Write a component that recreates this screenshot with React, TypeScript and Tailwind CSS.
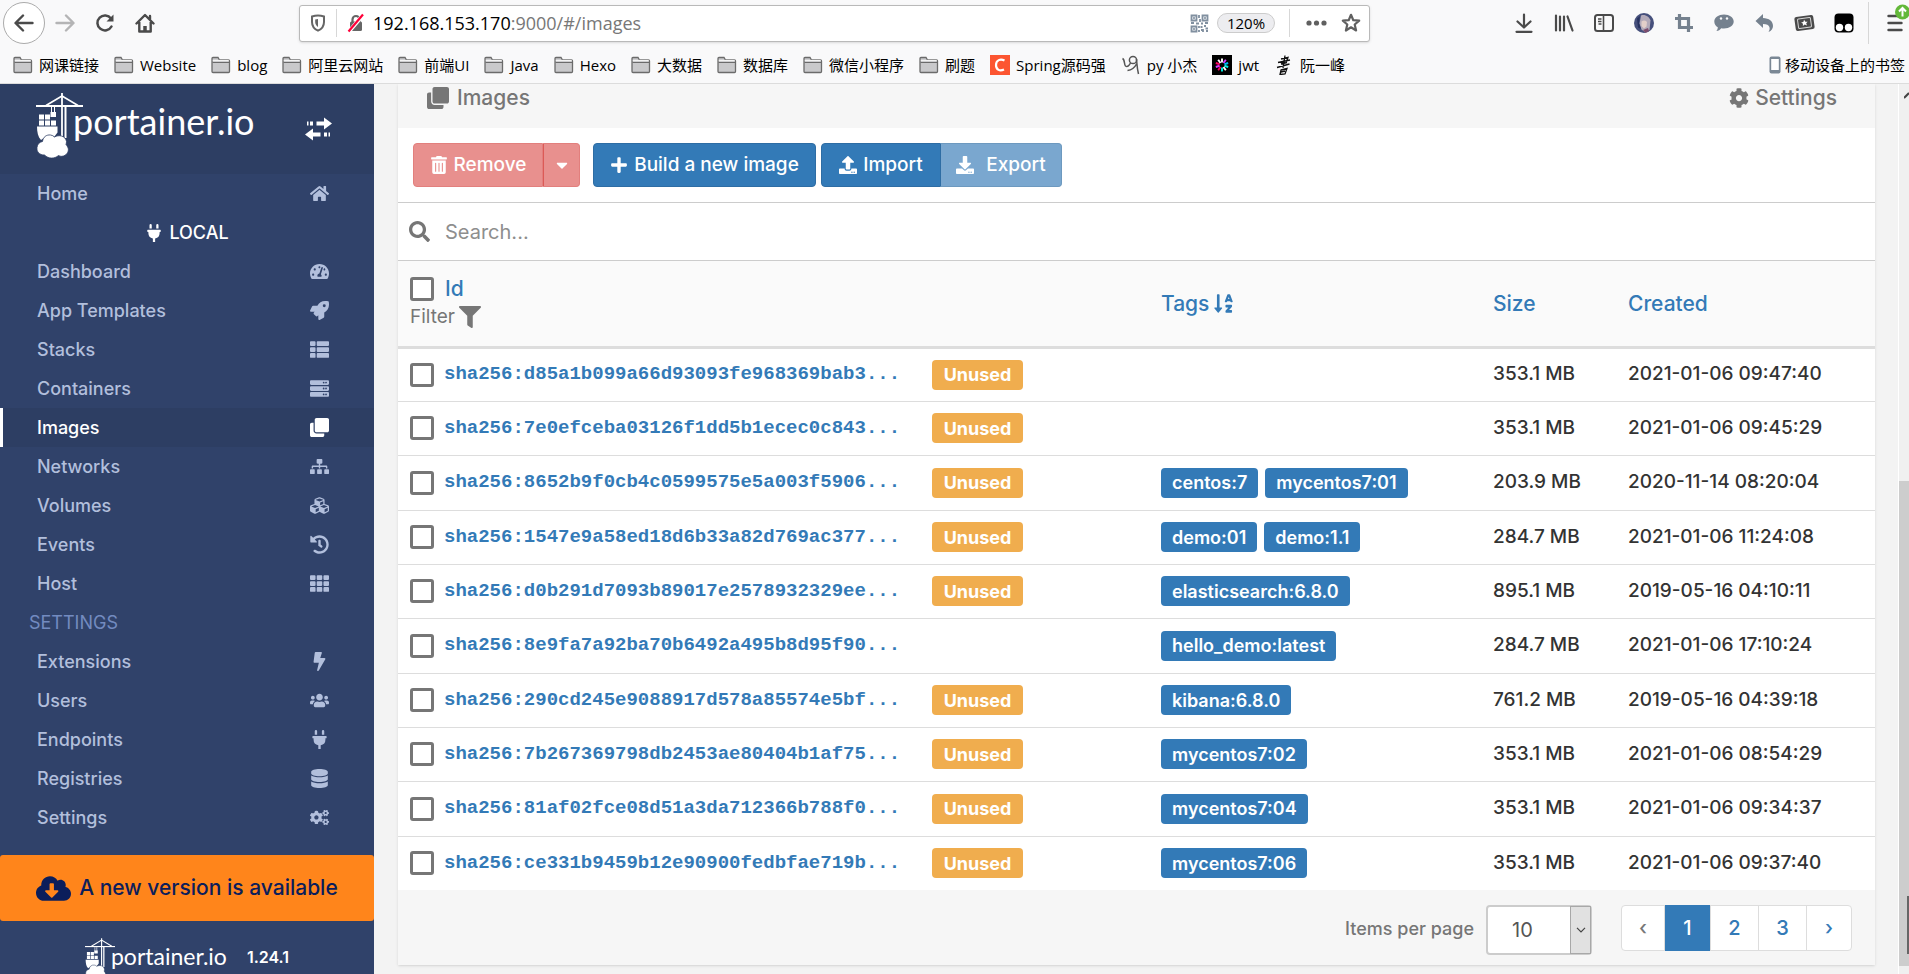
import type { ReactNode } from 'react';
import type { IconType } from 'react-icons';
import {
  FaBolt, FaCaretDown, FaClone, FaCloudDownloadAlt, FaCog, FaCogs, FaCubes, FaDatabase, FaDownload,
  FaFilter, FaHistory, FaHome, FaPlug, FaPlus, FaRocket, FaSearch, FaServer, FaSitemap,
  FaSortAlphaDown, FaTachometerAlt, FaTh, FaThList, FaTrashAlt, FaUpload, FaUsers,
} from 'react-icons/fa';

interface NavItem {
  label: string;
  icon: IconType;
  active?: boolean;
}

interface ImageRow {
  id: string;
  unused: boolean;
  tags: string[];
  size: string;
  created: string;
}

const ENDPOINT_NAV: NavItem[] = [
  { label: 'Dashboard', icon: FaTachometerAlt },
  { label: 'App Templates', icon: FaRocket },
  { label: 'Stacks', icon: FaThList },
  { label: 'Containers', icon: FaServer },
  { label: 'Images', icon: FaClone, active: true },
  { label: 'Networks', icon: FaSitemap },
  { label: 'Volumes', icon: FaCubes },
  { label: 'Events', icon: FaHistory },
  { label: 'Host', icon: FaTh },
];

const SETTINGS_NAV: NavItem[] = [
  { label: 'Extensions', icon: FaBolt },
  { label: 'Users', icon: FaUsers },
  { label: 'Endpoints', icon: FaPlug },
  { label: 'Registries', icon: FaDatabase },
  { label: 'Settings', icon: FaCogs },
];

const ROWS: ImageRow[] = [
  { id: 'd85a1b099a66d93093fe968369bab3', unused: true, tags: [], size: '353.1 MB', created: '2021-01-06 09:47:40' },
  { id: '7e0efceba03126f1dd5b1ecec0c843', unused: true, tags: [], size: '353.1 MB', created: '2021-01-06 09:45:29' },
  { id: '8652b9f0cb4c0599575e5a003f5906', unused: true, tags: ['centos:7', 'mycentos7:01'], size: '203.9 MB', created: '2020-11-14 08:20:04' },
  { id: '1547e9a58ed18d6b33a82d769ac377', unused: true, tags: ['demo:01', 'demo:1.1'], size: '284.7 MB', created: '2021-01-06 11:24:08' },
  { id: 'd0b291d7093b89017e2578932329ee', unused: true, tags: ['elasticsearch:6.8.0'], size: '895.1 MB', created: '2019-05-16 04:10:11' },
  { id: '8e9fa7a92ba70b6492a495b8d95f90', unused: false, tags: ['hello_demo:latest'], size: '284.7 MB', created: '2021-01-06 17:10:24' },
  { id: '290cd245e9088917d578a85574e5bf', unused: true, tags: ['kibana:6.8.0'], size: '761.2 MB', created: '2019-05-16 04:39:18' },
  { id: '7b267369798db2453ae80404b1af75', unused: true, tags: ['mycentos7:02'], size: '353.1 MB', created: '2021-01-06 08:54:29' },
  { id: '81af02fce08d51a3da712366b788f0', unused: true, tags: ['mycentos7:04'], size: '353.1 MB', created: '2021-01-06 09:34:37' },
  { id: 'ce331b9459b12e90900fedbfae719b', unused: true, tags: ['mycentos7:06'], size: '353.1 MB', created: '2021-01-06 09:37:40' },
];

const FOLDERS = ['网课链接', 'Website', 'blog', '阿里云网站', '前端UI', 'Java', 'Hexo', '大数据', '数据库', '微信小程序', '刷题'];

const PETALS = ['#fff', '#d63aff', '#00b9f1', '#00f2e6', '#fff', '#00f2e6', '#fb015b', '#d63aff', '#fb015b', '#fff'];

/* ---------- browser chrome ---------- */

function FolderIcon() {
  return (
    <svg width="20" height="18" viewBox="0 0 20 18" fill="none">
      <path d="M1 15.500v-13q0-1 1-1h5l1.500 2.500h9q1 0 1 1v10.500q0 1-1 1H2q-1 0-1-1z" fill="#c9c9cb" stroke="#6b6b6b" strokeWidth="1.300" />
      <path d="M1.800 4.500h16" stroke="#f3f3f3" strokeWidth="1.200" />
      <path d="M1.500 6.500h17" stroke="#6b6b6b" />
    </svg>
  );
}

function JwtIcon() {
  return (
    <svg width="20" height="20" viewBox="0 0 20 20">
      <rect width="20" height="20" fill="#000" />
      {PETALS.map((c, i) => (
        <path key={i} d="M10 7.500V3.500" stroke={c} strokeWidth="1.900" transform={`rotate(${i * 36} 10 10)`} />
      ))}
    </svg>
  );
}

function ToolButton({ label, children }: { label: string; children: ReactNode }) {
  return (
    <button aria-label={label} className="flex w-10 h-10 items-center justify-center text-[#4a4a4a]">
      {children}
    </button>
  );
}

function Bookmark({ icon, children }: { icon: ReactNode; children: ReactNode }) {
  return (
    <a href="#" className="flex shrink-0 items-center gap-1.5 whitespace-nowrap">
      {icon}
      <span>{children}</span>
    </a>
  );
}

function QrIcon() {
  return (
    <svg width="19" height="19" viewBox="0 0 19 19" fill="none" stroke="#8190a0" strokeWidth="1.800">
      <path d="M1.500 1.500h5v5h-5zM12.500 1.500h5v5h-5zM1.500 12.500h5v5h-5z" />
      <path d="M3.200 4h1.600M14.200 4h1.600M3.200 15h1.600M9 1v3M10 5v3M1 9h3M6 9.500h3M11 9.500h2M15 9h3M9 12v2M10.500 13h2M11 16h2v2M14 12h2M15.500 14.500h2.500M16 17h2M9 16v2" />
    </svg>
  );
}

function AddressBar() {
  return (
    <div className="flex flex-1 h-[37px] items-center border border-[#b9b9b9] rounded-[3px] bg-white pl-2.5 pr-2 shadow-sm">
      <svg width="16" height="18" viewBox="0 0 16 18" fill="none">
        <path d="M8 1.500c2 0 4.200.4 6 1v5.500c0 4-2.200 7-6 8.700C4.200 15 2 12 2 8V2.500c1.800-.6 4-1 6-1z" stroke="#666" strokeWidth="2" />
        <path d="M8 5v8c-1.800-1.200-2.800-3-2.800-5V5.500z" fill="#666" />
      </svg>
      <span className="mx-2.5 h-7 w-px bg-[#d7d7d7]" />
      <svg width="18" height="20" viewBox="0 0 18 20" fill="none">
        <path d="M5.500 9V6.500a3.500 3.500 0 0 1 7 0V9" stroke="#666" strokeWidth="2.200" />
        <rect x="3" y="8.500" width="12" height="9.500" rx="1.500" fill="#666" />
        <path d="M2 18.500L16.500 1.500" stroke="#fff" strokeWidth="4" />
        <path d="M1.500 18.500L16 1.500" stroke="#ff0039" strokeWidth="2.200" />
      </svg>
      <span className="ml-2 flex-1 text-[18px] text-[#777]">
        <span className="text-black">192.168.153.170</span>:9000/#/images
      </span>
      <QrIcon />
      <span className="ml-2 flex h-5 w-[58px] items-center justify-center rounded-full border border-[#ccc] bg-[#ededf0] text-[15px] text-black">120%</span>
      <span className="ml-3.5 mr-4 h-7 w-px bg-[#d7d7d7]" />
      <svg width="21" height="6" viewBox="0 0 21 6" fill="#606060">
        <circle cx="3" cy="3" r="2.600" /><circle cx="10.500" cy="3" r="2.600" /><circle cx="18" cy="3" r="2.600" />
      </svg>
      <svg className="ml-3.5" width="20" height="20" viewBox="0 0 20 20" fill="none" stroke="#606060" strokeWidth="2.200" strokeLinejoin="round">
        <path d="M10 1.800l2.300 5.400 5.900.5-4.500 3.800 1.400 6-5.100-3.200-5.100 3.200 1.400-6L1.800 7.700l5.900-.5z" />
      </svg>
    </div>
  );
}

function BrowserChrome() {
  return (
    <header className="h-[84px] shrink-0 border-b border-[#dcdcdc] bg-[#f9f9fa] text-black font-['Open_Sans','Noto_Sans_CJK_SC',sans-serif]">
      <div className="flex h-[46px] items-center">
        <div className="flex w-[299px] items-center pl-[3px]">
          <button aria-label="Back" className="flex w-[42px] h-[42px] items-center justify-center rounded-full border border-[#ababab] bg-white">
            <svg width="20" height="18" viewBox="0 0 20 18" fill="none" stroke="#4a4a4a" strokeWidth="2.400" strokeLinecap="round" strokeLinejoin="round">
              <path d="M18.500 9H2M9 1.500L1.500 9 9 16.500" />
            </svg>
          </button>
          <ToolButton label="Forward">
            <svg width="20" height="18" viewBox="0 0 20 18" fill="none" stroke="#b4b4b5" strokeWidth="2.400" strokeLinecap="round" strokeLinejoin="round">
              <path d="M1.500 9H18M11 1.500L18.500 9 11 16.500" />
            </svg>
          </ToolButton>
          <ToolButton label="Reload">
            <svg width="20" height="20" viewBox="0 0 20 20" fill="none" stroke="#4a4a4a" strokeWidth="2.500" strokeLinecap="round">
              <path d="M16.500 13.500a7.500 7.500 0 1 1-.5-8" />
              <path d="M18.500 1.500v7h-7z" fill="#4a4a4a" stroke="none" />
            </svg>
          </ToolButton>
          <ToolButton label="Home page">
            <svg width="20" height="20" viewBox="0 0 20 20" fill="none" stroke="#4a4a4a" strokeWidth="2.400" strokeLinecap="round" strokeLinejoin="round">
              <path d="M1.500 10.500L10 2l8.500 8.500M4.300 9v9.500h11.400V9M15 3v3" />
              <path d="M10 18v-5" strokeWidth="3.500" strokeLinecap="butt" />
            </svg>
          </ToolButton>
        </div>
        <AddressBar />
        <div className="flex w-[539px] items-center justify-end">
          <ToolButton label="Downloads">
            <svg width="18" height="20" viewBox="0 0 18 20" fill="none" stroke="currentColor" strokeWidth="2.200" strokeLinecap="round" strokeLinejoin="round">
              <path d="M9 1.500V14M2.500 8.500L9 14.500l6.500-6M1.500 18.800h15" />
            </svg>
          </ToolButton>
          <ToolButton label="Library">
            <svg width="20" height="18" viewBox="0 0 20 18" stroke="currentColor" strokeWidth="2.200" strokeLinecap="round">
              <path d="M2 1.500v15M6 2.500v14M10 2.500v14M13.500 2.500l5 14" />
            </svg>
          </ToolButton>
          <ToolButton label="Sidebars">
            <svg width="20" height="18" viewBox="0 0 20 18" fill="none" stroke="currentColor">
              <rect x="1" y="1" width="18" height="16" rx="2.500" strokeWidth="2" />
              <path d="M9.500 1v16" strokeWidth="1.600" />
              <path d="M4 5h3.500M4 7.500h3.500M4.500 10h3" strokeWidth="1.300" />
            </svg>
          </ToolButton>
          <ToolButton label="Profile">
            <svg width="20" height="20" viewBox="0 0 20 20">
              <circle cx="10" cy="10" r="10" fill="#46507c" />
              <path d="M7 2.500c4-1.500 8 1 9.500 5l-1 9.500-4 2.500-4-3-2-6z" fill="#b3aab9" />
              <path d="M7.500 8.500q3-2 5.500.5l-.5 4.500-2.500 2-2.500-2.500z" fill="#e3cfc9" />
              <path d="M3 5.500L6 3l-1 7 2 6-3-1.500z" fill="#27325f" />
              <path d="M9 17l5-2 1 3-3.500 2z" fill="#7d4d6d" />
            </svg>
          </ToolButton>
          <ToolButton label="Screenshot">
            <svg width="20" height="20" viewBox="0 0 20 20" fill="none" stroke="#75818e" strokeWidth="3.200">
              <path d="M5.500 1v13.500H19M1 5.500h13.500V19" />
            </svg>
          </ToolButton>
          <ToolButton label="Chat">
            <svg width="20" height="18" viewBox="0 0 20 18" fill="#75818e">
              <path d="M10 .5c5.500 0 9.700 3 9.700 7s-4.200 7-9.700 7c-1 0-2-.1-2.800-.3-1 1.500-2.700 2.600-4.900 2.800 1-1 1.500-2.300 1.500-3.700C1.500 12 .3 9.900.3 7.500c0-4 4.200-7 9.700-7z" />
              <circle cx="7" cy="4.500" r="1.200" fill="#f9f9fa" /><circle cx="13" cy="4.500" r="1.200" fill="#f9f9fa" />
            </svg>
          </ToolButton>
          <ToolButton label="Undo">
            <svg width="19" height="18" viewBox="0 0 19 18" fill="#75818e">
              <path d="M8 0v4c6 .2 10 3 10 8 0 2.500-1.500 4.800-4.500 6 2-3 2.200-8-5.500-8v4L.5 7z" />
            </svg>
          </ToolButton>
          <ToolButton label="Tickets">
            <svg width="21" height="18" viewBox="0 0 21 18">
              <g transform="rotate(-8 10.500 9)">
                <rect x="1" y="2" width="19" height="14" rx="2" fill="#4a4a4a" />
                <rect x="4" y="4.300" width="13" height="9.400" rx="1" fill="none" stroke="#d5d5d5" />
                <path d="M10.500 5.800l1 2.100 2.300.2-1.700 1.500.5 2.200-2.100-1.200-2.100 1.200.5-2.200-1.700-1.500 2.300-.2z" fill="#fff" />
              </g>
            </svg>
          </ToolButton>
          <ToolButton label="Scripts">
            <svg width="20" height="20" viewBox="0 0 20 20">
              <rect x=".5" y=".5" width="19" height="19" rx="4" fill="#000" />
              <circle cx="5.500" cy="14.500" r="3.700" fill="#fff" /><circle cx="14.500" cy="14.500" r="3.700" fill="#fff" />
            </svg>
          </ToolButton>
          <span className="ml-1 h-[42px] w-px bg-[#d7d7d7]" />
          <button aria-label="Menu" className="flex w-10 h-[46px] items-start justify-end pt-1">
            <svg width="22" height="28" viewBox="0 0 22 28" fill="none">
              <path d="M1.500 12h8M1.500 19h13M1.500 26h13" stroke="#4a4a4a" strokeWidth="2.400" strokeLinecap="round" />
              <circle cx="15.500" cy="8" r="7.500" fill="#63b839" />
              <path d="M15.500 12.500V4.500M12 7.500l3.500-3.500L19 7.500" stroke="#fff" strokeWidth="2" />
            </svg>
          </button>
        </div>
      </div>
      <nav className="flex h-[38px] items-center gap-[15px] pl-[13px] pr-1 text-[15px]">
        {FOLDERS.map(f => <Bookmark key={f} icon={<FolderIcon />}>{f}</Bookmark>)}
        <Bookmark
          icon={
            <svg width="20" height="20" viewBox="0 0 20 20" fill="none">
              <rect width="20" height="20" fill="#fc5531" />
              <path d="M14.500 5.500c-4-2-8.500-.5-8.500 4.500s4 6.500 8 4.500" stroke="#fff" strokeWidth="2.200" />
            </svg>
          }
        >
          Spring源码强
        </Bookmark>
        <Bookmark
          icon={
            <svg width="20" height="20" viewBox="0 0 20 20" fill="none" stroke="#555" strokeWidth="1.500">
              <path d="M1.500 3.500c2.500 1 1.500 6 3 7.500 2 1.500 4-1 5-3" />
              <circle cx="12" cy="5" r="3.600" />
              <path d="M15.500 4c.5 5 .5 9 2 15M15.500 9c-2 4-5 6-9 6.500" />
            </svg>
          }
        >
          py 小杰
        </Bookmark>
        <Bookmark icon={<JwtIcon />}>jwt</Bookmark>
        <Bookmark
          icon={
            <svg width="20" height="20" viewBox="0 0 20 20" fill="none" stroke="#111" strokeWidth="1.300">
              <path d="M7 4l7-1.500-1.500 4M4 7.500L16 5M7 9l6-1.500M3 12.500L15.500 9M11 .5L9 13" />
              <path d="M7 15l6-1.500-2 5.500-5 .5 1-4.500zM7 17l4-1" />
            </svg>
          }
        >
          阮一峰
        </Bookmark>
        <a href="#" className="ml-auto flex shrink-0 items-center gap-1">
          <svg width="12" height="18" viewBox="0 0 12 18">
            <rect x=".5" y=".5" width="11" height="17" rx="2" fill="#7b8895" />
            <rect x="2.200" y="3" width="7.600" height="11" fill="#fff" />
          </svg>
          移动设备上的书签
        </a>
      </nav>
    </header>
  );
}

/* ---------- portainer ---------- */

// crane, ship and cloud mark, scaled by the given width class
function CraneMark({ className }: { className: string }) {
  return (
    <svg className={className} viewBox="0 0 47 65" fill="none">
      <path d="M0 13h47" stroke="#fff" strokeWidth="1.800" />
      <path d="M10 12.500L26 3l16 9.500" stroke="#fff" strokeWidth="1.600" />
      <path d="M26 0v45" stroke="#fff" strokeWidth="1.800" />
      <path d="M29.500 13v32" stroke="#fff" strokeWidth="2" />
      <path d="M15.500 14v6M18.500 14v6" stroke="#fff" />
      <path d="M14.500 19h5.500v5h-5.500zM3 21.500h5v5H3zM9 21.500h5v5H9zM3 27.500h5v5H3zM9 27.500h5v5H9zM15 27.500h5v5h-5z" fill="#fff" />
      <path d="M1 33.500h20.500v6l-3 4H10L5 47c-3-3-4-8-4-13.500z" fill="#fff" />
      <path d="M8.500 62c-5 0-8-3-7.500-7.500.4-3.500 2.500-5.500 5.500-6 .5-4.500 4-7 8-6.500 1.700.2 3 .9 4 2 4-2.500 11-1.500 12 4.500 0 1-.1 2-.5 3 3 3.500 3.500 7-.5 10.500-2.500 1.700-5 1.700-7 .5-4 3.500-10 3.500-14-.5z" fill="#fff" stroke="#2d3e63" strokeWidth=".8" />
    </svg>
  );
}

function TransferIcon() {
  return (
    <svg width="27" height="24" viewBox="0 0 27 24" fill="#fff">
      <path d="M2 4.500h1.500v4H2zM5 4.500h3v4H5zM11.500 4.500H19V.5l8 6-8 6v-4h-7.500zM25 15.500h-1.500v4H25zM22 15.500h-3v4h3zM15.500 15.500H8v-4l-8 6 8 6v-4h7.500z" />
    </svg>
  );
}

function NavLink({ item }: { item: NavItem }) {
  const Icon = item.icon;
  return (
    <li>
      <a
        href="#"
        className={
          item.active
            ? 'flex h-[39px] items-center justify-between border-l-[3px] border-white bg-[#2d3e63] pl-[34px] pr-[42px] text-white'
            : 'flex h-[39px] items-center justify-between pl-[37px] pr-[42px] text-[#b2bfdc]'
        }
      >
        {item.label}
        <span className="flex w-[26px] justify-center">
          <Icon size={19} />
        </span>
      </a>
    </li>
  );
}

function Sidebar() {
  return (
    <aside className="flex w-[374px] shrink-0 flex-col overflow-hidden bg-[#30426a]">
      <div className="flex h-[90px] shrink-0 items-start justify-between bg-[#2d3e63] pl-9 pr-[42px] pt-[9px]">
        <div className="flex">
          <CraneMark className="w-[47px] h-[65px]" />
          <span className="-ml-2.5 mt-1.5 text-[36px] leading-[44px] text-white font-normal font-['Lato',sans-serif]">portainer.io</span>
        </div>
        <button aria-label="Toggle sidebar" className="mt-6"><TransferIcon /></button>
      </div>
      <ul className="shrink-0 text-[18px] font-medium">
        <NavLink item={{ label: 'Home', icon: FaHome }} />
        <li className="flex h-[39px] items-center justify-center gap-1.5 text-white">
          <FaPlug size={18} />
          LOCAL
        </li>
        {ENDPOINT_NAV.map(i => <NavLink key={i.label} item={i} />)}
        <li className="flex h-[39px] items-center pl-[29px] font-normal text-[#738bc0]">SETTINGS</li>
        {SETTINGS_NAV.map(i => <NavLink key={i.label} item={i} />)}
      </ul>
      <a href="#" className="mt-[18px] flex h-[66px] shrink-0 items-center justify-center gap-2 rounded-[3px] bg-[#ff851b] text-[21px] font-medium text-[#0b1e5b]">
        <FaCloudDownloadAlt size={35} />
        A new version is available
      </a>
      <div className="flex shrink-0 items-start justify-center pt-[17px] text-white">
        <CraneMark className="w-[30px] h-[42px]" />
        <span className="-ml-1 mt-1 text-[23px] leading-[28px] font-normal font-['Lato',sans-serif]">portainer.io</span>
        <span className="ml-5 mt-[7px] text-[16px] leading-6 font-semibold">1.24.1</span>
      </div>
    </aside>
  );
}

function Checkbox({ label }: { label: string }) {
  return (
    <input type="checkbox" aria-label={label} className="block w-6 h-6 shrink-0 appearance-none rounded-[3px] border-[3px] border-[#767676] bg-white" />
  );
}

function ActionBar() {
  return (
    <div className="flex h-[75px] items-center border-b border-[#ccc] px-[15px] text-[19px] font-medium text-white">
      <button disabled className="flex h-11 w-[130px] items-center justify-center gap-1.5 rounded-l border border-[#e27f7d] bg-[#e8908e]">
        <FaTrashAlt size={18} />
        Remove
      </button>
      <button disabled aria-label="More remove options" className="flex h-11 w-[37px] items-center justify-center rounded-r border border-l-[#dc5a56] border-[#e27f7d] bg-[#e8908e]">
        <FaCaretDown size={18} />
      </button>
      <button className="ml-[13px] flex h-11 w-[223px] items-center justify-center gap-1.5 rounded border border-[#2e6da4] bg-[#337ab7]">
        <FaPlus size={18} />
        Build a new image
      </button>
      <button className="ml-[5px] flex h-11 w-[120px] items-center justify-center gap-1.5 rounded-l border border-[#2e6da4] bg-[#337ab7]">
        <FaUpload size={18} />
        Import
      </button>
      <button disabled className="flex h-11 w-[121px] items-center justify-center gap-3 rounded-r border border-l-0 border-[#6d99bf] bg-[#7aa7cf]">
        <FaDownload size={18} />
        Export
      </button>
    </div>
  );
}

function ImagesTable() {
  return (
    <table className="w-full table-fixed text-left text-[19px] font-medium text-[#333]">
      <colgroup>
        <col />
        <col className="w-[332px]" />
        <col className="w-[135px]" />
        <col className="w-[259px]" />
      </colgroup>
      <thead className="bg-[#fafafa] text-[21px] text-[#337ab7]">
        <tr className="h-[86px] border-b-[3px] border-[#ddd]">
          <th className="px-3 font-medium">
            <div className="flex items-center gap-[11px]">
              <Checkbox label="Select all" />
              <a href="#" className="leading-7">Id</a>
            </div>
            <button className="flex items-center gap-1 text-[19px] font-normal text-[#767676]">
              Filter <FaFilter size={22} />
            </button>
          </th>
          <th className="px-3 font-medium">
            <a href="#" className="flex items-center gap-1">Tags <FaSortAlphaDown size={21} /></a>
          </th>
          <th className="px-3 font-medium"><a href="#">Size</a></th>
          <th className="px-3 font-medium"><a href="#">Created</a></th>
        </tr>
      </thead>
      <tbody>
        {ROWS.map(r => (
          <tr key={r.id} className="h-[54px] border-b border-[#ddd] last:border-0 nth-[3n]:h-[55px]">
            <td className="px-3">
              <div className="flex items-center">
                <Checkbox label={`Select ${r.id}`} />
                <a href="#" className="ml-2.5 w-[488px] whitespace-nowrap text-[#337ab7] text-[19px] font-bold font-['Liberation_Mono',monospace]">
                  sha256:{r.id}...
                </a>
                {r.unused && (
                  <span className="flex h-[30px] w-[91px] items-center justify-center rounded bg-[#f0ad4e] text-[18px] font-bold text-white">Unused</span>
                )}
              </div>
            </td>
            <td className="px-3">
              <div className="flex gap-[7px]">
                {r.tags.map(t => (
                  <span key={t} className="flex h-[30px] items-center rounded bg-[#337ab7] px-[11px] text-[18px] font-semibold text-white">{t}</span>
                ))}
              </div>
            </td>
            <td className="px-3 whitespace-nowrap">{r.size}</td>
            <td className="px-3 whitespace-nowrap">{r.created}</td>
          </tr>
        ))}
      </tbody>
    </table>
  );
}

function TableFooter() {
  return (
    <div className="flex h-[75px] items-start justify-end bg-[#f6f6f6] pr-[23px] pt-[15px] text-[18px] font-medium">
      <label htmlFor="per-page" className="mt-2.5 mr-3 text-[#767676]">Items per page</label>
      <div className="relative mr-[29px]">
        <select id="per-page" className="block h-[50px] w-[106px] appearance-none rounded border-2 border-[#ccc] bg-white pl-6 text-[20px] font-normal text-[#555]">
          <option>10</option>
          <option>25</option>
        </select>
        <span className="pointer-events-none absolute inset-y-px right-px flex w-[21px] items-center justify-center border border-[#a8a8a8] bg-[#e1e1e1]">
          <svg width="10" height="6" viewBox="0 0 10 6" fill="none" stroke="#444" strokeWidth="1.200">
            <path d="M1 .8l4 4 4-4" />
          </svg>
        </span>
      </div>
      <div className="flex h-[46px] divide-x divide-[#ddd] rounded border border-[#ddd] bg-white text-[20px] text-[#337ab7]">
        <button className="w-[43px] text-[#777]">‹</button>
        <button className="-my-px w-[46px] bg-[#337ab7] text-white">1</button>
        <button className="w-12">2</button>
        <button className="w-12">3</button>
        <button className="w-11">›</button>
      </div>
    </div>
  );
}

function Scrollbar() {
  return (
    <div className="flex w-[11px] shrink-0 flex-col items-end overflow-hidden border-l border-white bg-[#f0f0f0]">
      <svg className="mt-1.5 h-3 shrink-0" width="5" height="12" viewBox="0 0 5 12" fill="none">
        <path d="M0 8l5-5" stroke="#444" strokeWidth="2" />
      </svg>
      <span className="mt-[379px] flex h-[485px] w-full shrink-0 items-end justify-end bg-[#cdcdcd] pb-3">
        <span className="h-[58px] w-0.5 bg-[#666]" />
      </span>
    </div>
  );
}

export default function App() {
  return (
    <div className="flex h-screen flex-col overflow-hidden bg-[#f3f3f3] font-['Inter','Noto_Sans_CJK_SC',sans-serif]">
      <BrowserChrome />
      <div className="flex min-h-0 flex-1">
        <Sidebar />
        <main className="min-w-0 flex-1 overflow-hidden pl-6 pr-[23px]">
          <section className="bg-white shadow">
            <div className="flex h-11 items-start justify-between bg-[#f6f6f6] pl-[29px] pr-[38px] text-[21px] leading-7 font-medium text-[#767676]">
              <h1 className="flex items-center gap-2"><FaClone size={22} /> Images</h1>
              <button className="flex items-center gap-1.5"><FaCog size={20} /> Settings</button>
            </div>
            <ActionBar />
            <label className="flex h-[58px] items-center gap-[15px] border-b border-[#ccc] pl-[11px] text-[#767676]">
              <FaSearch size={21} />
              <input type="text" placeholder="Search..." className="flex-1 text-[20px] outline-none placeholder:text-[#8e8e8e]" />
            </label>
            <ImagesTable />
            <TableFooter />
          </section>
        </main>
        <Scrollbar />
      </div>
    </div>
  );
}
